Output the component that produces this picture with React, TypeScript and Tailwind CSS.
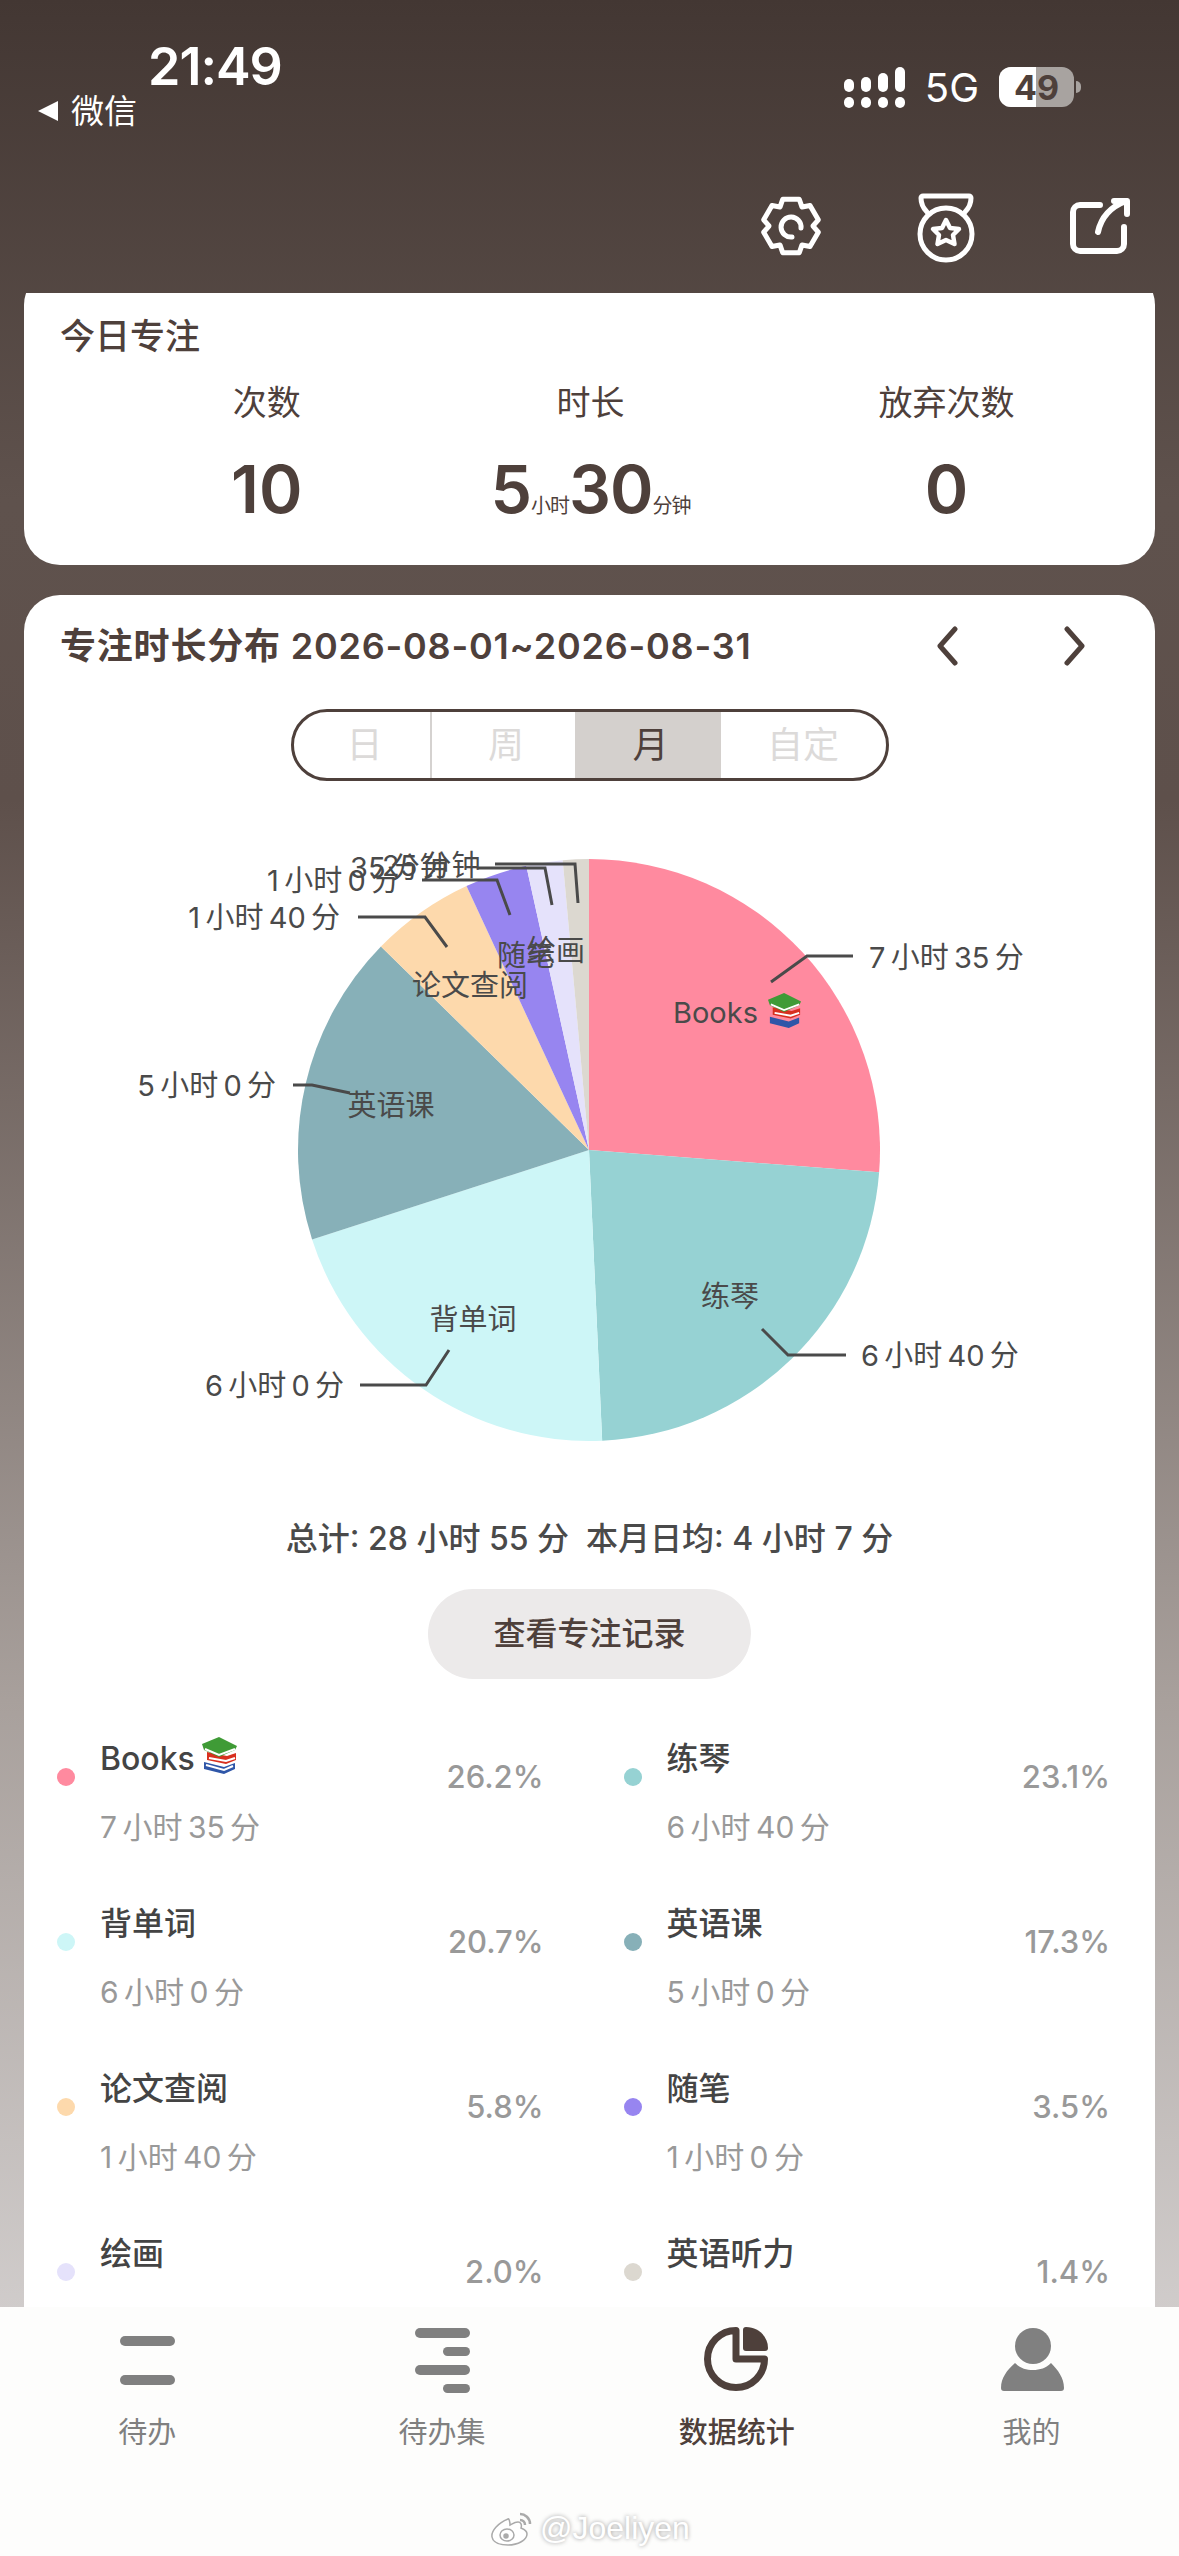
const FONT = "font-['Inter','Noto_Sans_CJK_SC',sans-serif]";

const slices = [
  { name: "Books", time: "7\u2009小时\u200935\u2009分", pct: "26.2%", mins: 455, color: "#ff8a9f" },
  { name: "练琴", time: "6\u2009小时\u200940\u2009分", pct: "23.1%", mins: 400, color: "#96d2d3" },
  { name: "背单词", time: "6\u2009小时\u20090\u2009分", pct: "20.7%", mins: 360, color: "#cdf6f7" },
  { name: "英语课", time: "5\u2009小时\u20090\u2009分", pct: "17.3%", mins: 300, color: "#87b0b8" },
  { name: "论文查阅", time: "1\u2009小时\u200940\u2009分", pct: "5.8%", mins: 100, color: "#fdd9ac" },
  { name: "随笔", time: "1\u2009小时\u20090\u2009分", pct: "3.5%", mins: 60, color: "#9785f0" },
  { name: "绘画", time: "35\u2009分钟", pct: "2.0%", mins: 35, color: "#e5e2fb" },
  { name: "英语听力", time: "25\u2009分钟", pct: "1.4%", mins: 25, color: "#dcd8d0" },
];

function BooksEmoji({ size = 36 }: { size?: number }) {
  return (
    <svg width={size} height={size} viewBox="0 0 36 38">
      <path d="M2 25l20 5 11-4v6l-11 5-20-5z" fill="#2f56a8" />
      <path d="M4 28l18 5 9-4" stroke="#fff" strokeWidth="2" fill="none" />
      <path d="M5 15l20 4 9-3v7l-10 4-19-4z" fill="#d8301f" />
      <path d="M7 21l17 3 9-3" stroke="#fff" strokeWidth="2" fill="none" />
      <path d="M0 7l17-7 18 9-2 4-16 7L2 13z" fill="#3f9b36" />
      <path d="M3 12l14 6 16-6" stroke="#fff" strokeWidth="2" fill="none" />
    </svg>
  );
}

function PieChart() {
  const cx = 589;
  const cy = 1150;
  const r = 291;
  const total = slices.reduce((s, x) => s + x.mins, 0);
  let acc = 0;
  const paths = slices.map((s) => {
    const a0 = (acc / total) * Math.PI * 2;
    acc += s.mins;
    const a1 = (acc / total) * Math.PI * 2;
    const large = a1 - a0 > Math.PI ? 1 : 0;
    const d = `M${cx} ${cy}L${cx + r * Math.sin(a0)} ${cy - r * Math.cos(a0)}A${r} ${r} 0 ${large} 1 ${cx + r * Math.sin(a1)} ${cy - r * Math.cos(a1)}Z`;
    return <path key={s.name} d={d} fill={s.color} />;
  });

  const lines = [
    "771,982 807,956 853,956",
    "762,1329 788,1355 846,1355",
    "360,1385 426,1385 449,1350",
    "293,1085 312,1085 350,1093",
    "358,917 425,917 447,947",
    "422,880 497,880 510,915",
    "477,868 545,868 552,905",
    "495,864 575,864 578,903",
  ];
  const labels: [string, number, number, "start" | "middle" | "end"][] = [
    ["7\u2009小时\u200935\u2009分", 869, 957, "start"],
    ["6\u2009小时\u200940\u2009分", 861, 1355, "start"],
    ["6\u2009小时\u20090\u2009分", 344, 1385, "end"],
    ["5\u2009小时\u20090\u2009分", 276, 1085, "end"],
    ["1\u2009小时\u200940\u2009分", 340, 917, "end"],
    ["1\u2009小时\u20090\u2009分", 400, 880, "end"],
    ["35\u2009分钟", 350, 867, "start"],
    ["25\u2009分钟", 382, 865, "start"],
    ["练琴", 730, 1296, "middle"],
    ["背单词", 473, 1319, "middle"],
    ["英语课", 391, 1105, "middle"],
    ["论文查阅", 470, 985, "middle"],
    ["随笔", 526, 955, "middle"],
    ["绘画", 556, 950, "middle"],
    ["Books", 673, 1012, "start"],
  ];

  return (
    <svg className="block w-full h-[700px]" viewBox="24 800 1131 700">
      {paths}
      {lines.map((p) => (
        <polyline key={p} points={p} fill="none" stroke="#4a4a4a" strokeWidth="3" />
      ))}
      {labels.map(([t, x, y, anchor]) => (
        <text
          key={t}
          x={x}
          y={y}
          textAnchor={anchor}
          dominantBaseline="central"
          fontSize="29"
          fill="#4a4a4a"
          fontFamily="Inter, 'Noto Sans CJK SC', sans-serif"
        >
          {t}
        </text>
      ))}
      <svg x="768" y="993" width="34" height="36" viewBox="0 0 36 38">
        <path d="M2 25l20 5 11-4v6l-11 5-20-5z" fill="#2f56a8" />
        <path d="M5 15l20 4 9-3v7l-10 4-19-4z" fill="#d8301f" />
        <path d="M7 21l17 3 9-3" stroke="#fff" strokeWidth="2" fill="none" />
        <path d="M0 7l17-7 18 9-2 4-16 7L2 13z" fill="#3f9b36" />
        <path d="M3 12l14 6 16-6" stroke="#fff" strokeWidth="2" fill="none" />
      </svg>
    </svg>
  );
}

function Gear() {
  const cx = 31;
  const cy = 31;
  const pts: string[] = [];
  for (let i = 0; i < 6; i++) {
    const a = (i * Math.PI) / 3 - Math.PI / 2;
    const step = 0.3;
    [
      [22, -0.52],
      [28, -step],
      [28, step],
      [22, 0.52],
    ].forEach(([rad, off]) => {
      pts.push(`${cx + rad * Math.cos(a + off)},${cy + rad * Math.sin(a + off)}`);
    });
  }
  return (
    <svg className="mt-[2px]" width="62" height="62" viewBox="0 0 62 62" fill="none" stroke="#fff" strokeWidth="5" strokeLinejoin="round" strokeLinecap="round">
      <polygon points={pts.join(" ")} />
      <path d="M41 33a10 10 0 1 0 -9 9" />
    </svg>
  );
}

function Medal() {
  return (
    <svg width="58" height="70" viewBox="0 0 58 70" fill="none" stroke="#fff" strokeWidth="5" strokeLinejoin="round" strokeLinecap="round">
      <path d="M6 3h46a2 2 0 0 1 2 2c0 5-2 10-6 14M6 3a2 2 0 0 0-2 2c0 5 2 10 6 14" />
      <circle cx="29" cy="41" r="26" />
      <path d="M29 27l4 8 9 1-6 6 1.500 9-8.500-4-8.500 4 1.500-9-6-6 9-1z" strokeWidth="4.500" />
    </svg>
  );
}

function Share() {
  return (
    <svg className="mt-[4px]" width="60" height="58" viewBox="0 0 60 58" fill="none" stroke="#fff" strokeWidth="6" strokeLinejoin="round" strokeLinecap="round">
      <path d="M30 8H10a7 7 0 0 0-7 7v32a7 7 0 0 0 7 7h37a7 7 0 0 0 7-7V30" />
      <path d="M28 35c3-14 12-25 28-31" />
      <path d="M44 4h13v13" />
    </svg>
  );
}

function StatusBar() {
  return (
    <div className="flex h-[170px] text-white">
      <div className="pl-[38px] pt-[36px] w-[300px]">
        <div className="pl-[110px] text-[52px] leading-[62px] font-semibold tracking-[-1px]">21:49</div>
        <div className="flex items-center gap-[13px] -mt-[6px] text-[33px] leading-[38px]">
          <span className="w-0 h-0 border-y-[10px] border-y-transparent border-r-[20px] border-r-white" />
          微信
        </div>
      </div>
      <div className="flex-1 flex justify-end items-start pt-[67px] pr-[98px]">
        <div className="flex gap-[7px] h-[41px] items-end">
          {[13, 15, 19, 25].map((h) => (
            <div key={h} className="flex flex-col gap-[5px] w-[10px]">
              <div className="bg-white rounded-full w-full" style={{ height: h }} />
              <div className="bg-white rounded-full w-full h-[11px]" />
            </div>
          ))}
        </div>
        <div className="ml-[20px] mr-[20px] text-[40px] leading-[41px]">5G</div>
        <div className="relative w-[75px] h-[40px] rounded-[12px] overflow-hidden bg-[#a8a3a0]">
          <div className="absolute inset-y-0 left-0 w-[37px] bg-white" />
          <div className="absolute inset-0 flex items-center justify-center text-[34px] font-bold text-[#4e403b]">49</div>
        </div>
        <div className="w-[5px] h-[12px] mt-[14px] ml-[2px] rounded-r-full bg-[#a8a3a0]" />
      </div>
    </div>
  );
}

function Row({ s }: { s: (typeof slices)[number] }) {
  return (
    <div className="relative h-[165px] flex justify-between">
      <div className="flex">
        <span className="w-[18px] h-[18px] rounded-full mt-[48px] mr-[25px]" style={{ backgroundColor: s.color }} />
        <div>
          <div className="flex items-center h-[36px] mt-[21px] text-[32px] font-medium text-[#444]">
            {s.name}
            {s.name === "Books" && (
              <span className="ml-[6px] -mt-[6px]">
                <BooksEmoji size={38} />
              </span>
            )}
          </div>
          <div className="mt-[32px] text-[30px] leading-[36px] text-[#999]">{s.time}</div>
        </div>
      </div>
      <div className="mt-[39px] text-[31px] leading-[36px] font-medium text-[#999]">{s.pct}</div>
    </div>
  );
}

function NavItem({ label, active, icon }: { label: string; active?: boolean; icon: React.ReactNode }) {
  return (
    <div className="flex flex-col items-center">
      <div className="h-[66px] flex items-center justify-center">{icon}</div>
      <div className={`mt-[22px] text-[29px] leading-[36px] ${active ? "text-[#4e403b] font-medium" : "text-[#808080]"}`}>{label}</div>
    </div>
  );
}

export default function App() {
  return (
    <div className={`${FONT} relative w-[1179px] h-[2556px] flex flex-col overflow-hidden bg-[linear-gradient(to_bottom,#433733_0px,#5f524d_500px,#5e504b_800px,#a8a09c_1700px,#d0cccb_2310px)]`}>
      <StatusBar />

      {/* top actions */}
      <div className="h-[123px] flex justify-end items-start pt-[23px] pr-[49px]">
        <div className="flex items-start gap-[95px]">
          <Gear />
          <Medal />
          <Share />
        </div>
      </div>

      {/* scroll area */}
      <div className="flex-1 overflow-hidden px-[24px] flex flex-col gap-[30px]">
        {/* today, already scrolled a little under the header */}
        <div className="bg-white rounded-[36px] -mt-[24px] h-[296px] shrink-0 pl-[36px] pt-[46px] text-[#4e403b]">
          <div className="text-[35px] leading-[42px] font-medium">今日专注</div>
          <div className="flex gap-[188px] pl-[171px] mt-[25px]">
            <div className="flex flex-col items-center">
              <div className="text-[34px] leading-[42px]">次数</div>
              <div className="mt-[25px] text-[66px] leading-[80px] font-semibold">10</div>
            </div>
            <div className="flex flex-col items-center">
              <div className="text-[34px] leading-[42px]">时长</div>
              <div className="mt-[25px] text-[66px] leading-[80px] font-semibold flex items-baseline tracking-[-1px]">
                5<span className="text-[20px] font-normal">小时</span>30<span className="text-[20px] font-normal">分钟</span>
              </div>
            </div>
            <div className="flex flex-col items-center">
              <div className="text-[34px] leading-[42px]">放弃次数</div>
              <div className="mt-[25px] text-[66px] leading-[80px] font-semibold">0</div>
            </div>
          </div>
        </div>

        {/* distribution */}
        <div className="bg-white rounded-t-[36px] shrink-0">
          <div className="flex items-center justify-between pl-[36px] pr-[68px] h-[70px] pt-[16px] box-content text-[#4e403b]">
            <div className="text-[36px] font-semibold tracking-[0.8px] whitespace-nowrap">专注时长分布 2026-08-01~2026-08-31</div>
            <div className="flex gap-[104px]">
              <svg width="24" height="40" viewBox="0 0 24 40" fill="none" stroke="#4e403b" strokeWidth="5" strokeLinecap="round" strokeLinejoin="round">
                <path d="M20 3L5 20l15 17" />
              </svg>
              <svg width="24" height="40" viewBox="0 0 24 40" fill="none" stroke="#4e403b" strokeWidth="5" strokeLinecap="round" strokeLinejoin="round">
                <path d="M4 3l15 17L4 37" />
              </svg>
            </div>
          </div>

          <div className="flex justify-center mt-[28px]">
            <div className="w-[598px] h-[72px] rounded-[36px] border-[3px] border-[#4e403b] overflow-hidden flex text-[36px] text-[#dcdad9]">
              <div className="w-[138px] pl-[6px] flex items-center justify-center border-r-2 border-[#d5d2d0]">日</div>
              <div className="w-[143px] pl-[6px] flex items-center justify-center">周</div>
              <div className="w-[146px] pl-[6px] flex items-center justify-center bg-[#d4d0cd] text-[#4e403b]">月</div>
              <div className="flex-1 flex items-center justify-center">自定</div>
            </div>
          </div>

          <div className="mt-[19px]">
            <PieChart />
          </div>

          <div className="text-center text-[32px] leading-[40px] font-medium text-[#4a4a4a] mt-[19px] whitespace-pre">
            总计: 28 小时 55 分  本月日均: 4 小时 7 分
          </div>
          <div className="flex justify-center mt-[30px]">
            <div className="w-[323px] h-[90px] rounded-full bg-[#eceaea] flex items-center justify-center text-[32px] font-medium text-[#4e403b]">
              查看专注记录
            </div>
          </div>

          <div className="grid grid-cols-2 gap-x-[80px] pl-[33px] pr-[45px] mt-[41px]">
            {slices.map((s) => (
              <Row key={s.name} s={s} />
            ))}
          </div>
        </div>
      </div>

      {/* tab bar */}
      <div className="relative h-[249px] shrink-0 bg-[#fdfdfc] grid grid-cols-4 pt-[20px] items-start">
        <NavItem
          label="待办"
          icon={
            <div className="w-[55px] flex flex-col gap-[29px]">
              <div className="h-[10px] rounded-full bg-[#808080]" />
              <div className="h-[10px] rounded-full bg-[#808080]" />
            </div>
          }
        />
        <NavItem
          label="待办集"
          icon={
            <div className="w-[55px] flex flex-col items-end gap-[9px]">
              <div className="h-[10px] w-full rounded-full bg-[#808080]" />
              <div className="h-[9px] w-[27px] rounded-full bg-[#808080]" />
              <div className="h-[10px] w-full rounded-full bg-[#808080]" />
              <div className="h-[9px] w-[27px] rounded-full bg-[#808080]" />
            </div>
          }
        />
        <NavItem
          label="数据统计"
          active
          icon={
            <svg width="66" height="66" viewBox="0 0 66 66" fill="none">
              <path d="M32 3.500V32H60.500A28.500 28.500 0 1 1 32 3.500Z" stroke="#4e403b" strokeWidth="7" strokeLinejoin="round" />
              <path d="M39 3a3 3 0 0 1 3-3C55 0 64 10 64 21a3 3 0 0 1-3 3H42a3 3 0 0 1-3-3z" fill="#4e403b" />
            </svg>
          }
        />
        <NavItem
          label="我的"
          icon={
            <svg className="ml-[3px]" width="64" height="64" viewBox="0 0 64 64" fill="#808080">
              <ellipse cx="32" cy="18" rx="18" ry="18" />
              <path d="M14 35c5 5 11 7 18 7s13-2 18-7c7 7 13 15 13 25 0 2-1 3-3 3H3c-2 0-3-1-3-3 0-10 6-18 14-25z" />
            </svg>
          }
        />
        <div className="absolute left-[490px] top-[203px] flex items-center gap-[6px] text-[32px] leading-[36px] text-white font-['Liberation_Sans',sans-serif] [text-shadow:0_0_4px_#999]">
          <svg width="44" height="36" viewBox="0 0 44 36" fill="#fff" stroke="#aaa" strokeWidth="1.500">
            <path d="M18 9C8 13 1 21 2 27c1 6 9 8 16 8 10 0 19-5 19-11 0-4-4-5-6-6 1-3 0-6-3-6-3 0-6 2-8 3 0-3-1-7-2-6z" />
            <ellipse cx="17" cy="25" rx="7" ry="6" fill="none" />
            <circle cx="16" cy="26" r="2" fill="#aaa" />
            <path d="M30 4c5 0 10 4 10 10M30 10c3 0 5 2 5 5" fill="none" strokeWidth="2.500" />
          </svg>
          @Joeliyen
        </div>
      </div>
    </div>
  );
}
